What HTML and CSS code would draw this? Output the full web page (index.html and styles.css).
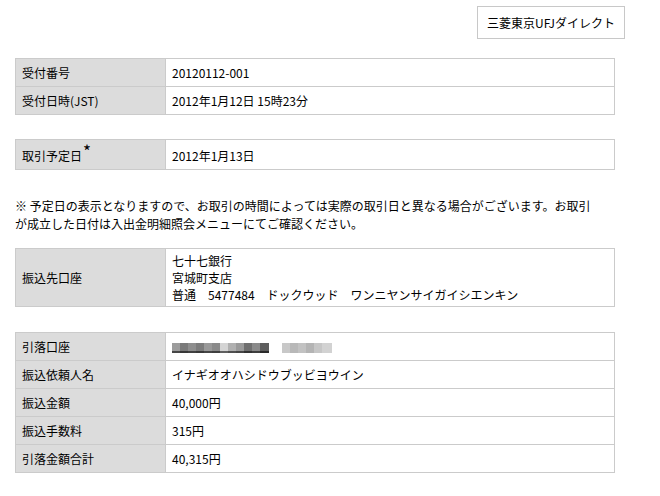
FILE: index.html
```html
<!DOCTYPE html>
<html lang="ja">
<head>
<meta charset="utf-8">
<title>振込受付</title>
<link rel="stylesheet" href="styles.css">
</head>
<body>
<div class="page">
  <div class="header">
    <div class="brand-btn">三菱東京UFJダイレクト</div>
  </div>

  <table class="info info-first">
    <tr><th>受付番号</th><td>20120112-001</td></tr>
    <tr><th>受付日時(JST)</th><td>2012年1月12日 15時23分</td></tr>
  </table>

  <table class="info info-date">
    <tr><th>取引予定日<span class="mark">*</span></th><td>2012年1月13日</td></tr>
  </table>

  <p class="note">※ 予定日の表示となりますので、お取引の時間によっては実際の取引日と異なる場合がございます。お取引<br>が成立した日付は入出金明細照会メニューにてご確認ください。</p>

  <table class="info info-dest">
    <tr><th>振込先口座</th><td class="multi">七十七銀行<br>宮城町支店<br>普通　5477484　ドックウッド　ワンニヤンサイガイシエンキン</td></tr>
  </table>

  <table class="info info-last">
    <tr><th>引落口座</th><td><span class="blur blur-a"></span><span class="blur blur-b"></span></td></tr>
    <tr><th>振込依頼人名</th><td>イナギオオハシドウブッビヨウイン</td></tr>
    <tr><th>振込金額</th><td>40,000円</td></tr>
    <tr><th>振込手数料</th><td>315円</td></tr>
    <tr><th>引落金額合計</th><td>40,315円</td></tr>
  </table>
</div>
</body>
</html>
```

FILE: styles.css
```css
* { box-sizing: border-box; }
html, body { margin: 0; padding: 0; background: #fff; }
body {
  font-family: "Noto Sans CJK JP", "Noto Sans", sans-serif;
  font-size: 12px;
  color: #000;
}
.page {
  padding: 6px 0 0 15px;
}
.header {
  width: 610px;
  display: flex;
  justify-content: flex-end;
}
.brand-btn {
  width: 148px;
  height: 33px;
  border: 1px solid #c8c8c8;
  background: #fff;
  display: flex;
  align-items: center;
  justify-content: center;
  font-size: 12px;
  line-height: 17px;
}
.info {
  width: 600px;
  border-collapse: collapse;
  margin: 0;
}
.info th, .info td {
  border: 1px solid #cbcbcb;
  padding: 5px 6px;
  line-height: 17px;
  height: 28px;
  text-align: left;
  font-weight: normal;
  vertical-align: middle;
}
.info th {
  width: 150px;
  background: #dcdcdc;
}
.info td { background: #fff; }
.info-first { margin-top: 19px; }
.info-date { margin-top: 24px; }
.info-date th, .info-date td { padding-top: 6px; padding-bottom: 5px; height: 29px; }
.mark {
  display: inline-block;
  font-size: 17px;
  line-height: 10px;
  vertical-align: 3px;
  margin-left: 1px;
}
.note {
  margin: 27px 0 0 0;
  line-height: 18px;
  width: 620px;
}
.info-dest { margin-top: 15px; }
.info-dest td.multi { padding-top: 3px; padding-bottom: 3px; }
.info-last { margin-top: 25px; }
.blur {
  display: inline-block;
  height: 10px;
  vertical-align: -1px;
}
.blur-a {
  width: 97px;
  background:
    linear-gradient(to bottom, transparent 8px, rgba(0,0,0,0.55) 8px, rgba(0,0,0,0.55) 10px) 0 0 / 100% 100% no-repeat,
    linear-gradient(to right,
      #9c9c9c 0 8px, #7a7a7a 8px 16px, #8e8e8e 16px 24px, #7c7c7c 24px 32px,
      #999 32px 40px, #8a8a8a 40px 48px, #d4d4d4 48px 56px, #b0b0b0 56px 64px,
      #9a9a9a 64px 72px, #6f6f6f 72px 80px, #8a8a8a 80px 88px, #5e5e5e 88px 97px);
}
.blur-b {
  width: 50px;
  margin-left: 13px;
  background: linear-gradient(to right,
    #c8c8c8 0 8px, #b8b8b8 8px 16px, #c2c2c2 16px 24px, #b4b4b4 24px 32px,
    #c6c6c6 32px 40px, #d2d2d2 40px 50px);
}
```
